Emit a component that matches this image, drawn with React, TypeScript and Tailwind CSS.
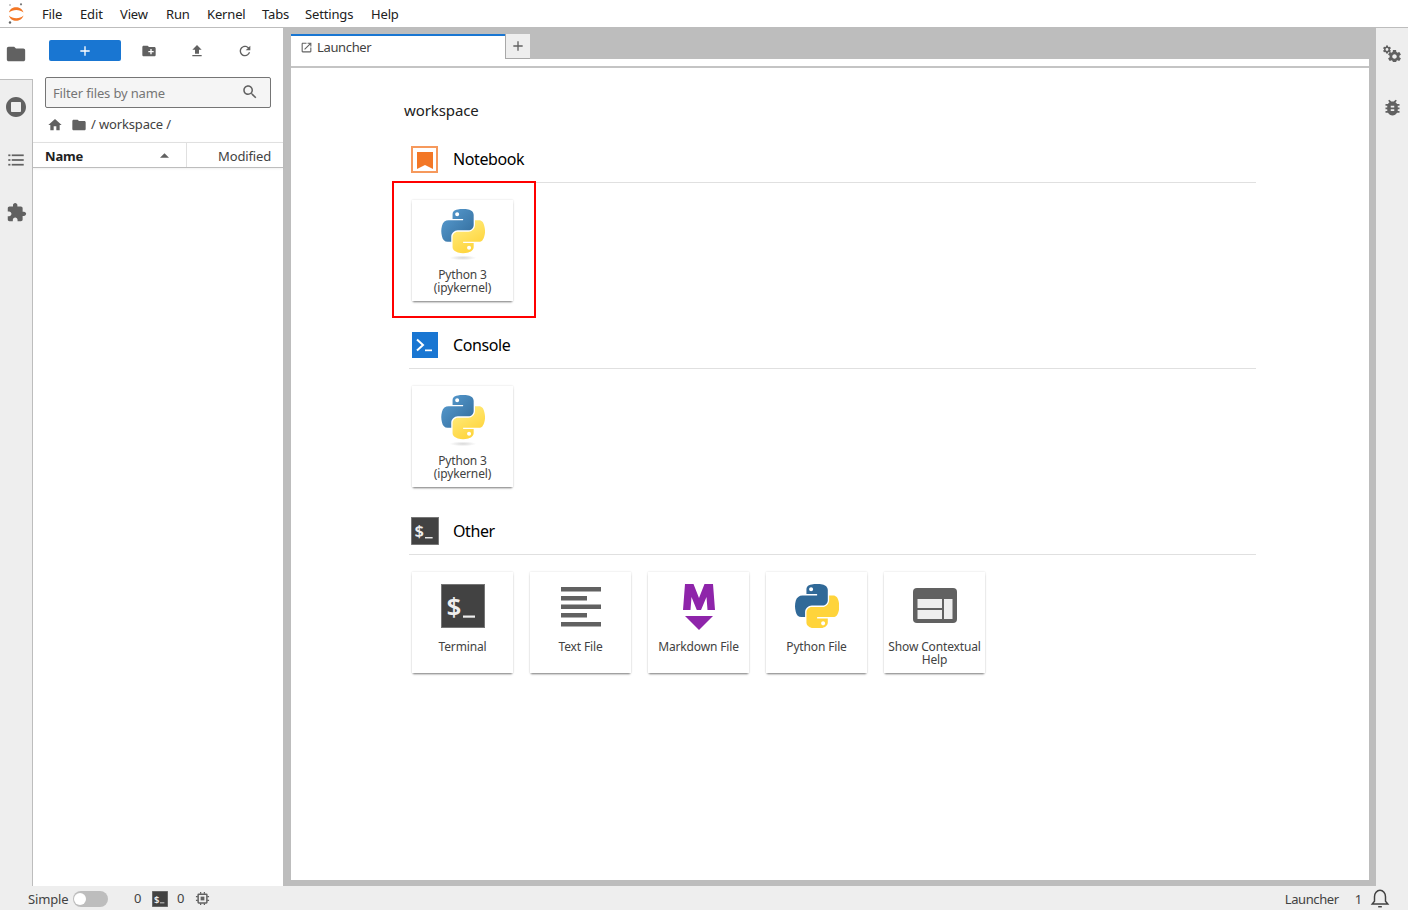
const ICONS = {
  folder: "M10 4H4c-1.1 0-1.99.9-1.99 2L2 18c0 1.1.9 2 2 2h16c1.1 0 2-.9 2-2V8c0-1.1-.9-2-2-2h-8l-2-2z",
  stop: "M12 2C6.47 2 2 6.47 2 12s4.47 10 10 10 10-4.47 10-10S17.53 2 12 2zm5 14c0 .55-.45 1-1 1H8c-.55 0-1-.45-1-1V8c0-.55.45-1 1-1h8c.55 0 1 .45 1 1v8z",
  puzzle: "M20.5 11H19V7c0-1.1-.9-2-2-2h-4V3.5C13 2.12 11.88 1 10.5 1S8 2.12 8 3.5V5H4c-1.1 0-1.99.9-1.99 2v3.8H3.5c1.49 0 2.7 1.21 2.7 2.7s-1.21 2.7-2.7 2.7H2V20c0 1.1.9 2 2 2h3.8v-1.5c0-1.49 1.21-2.7 2.7-2.7 1.49 0 2.7 1.21 2.7 2.7V22H17c1.1 0 2-.9 2-2v-4h1.5c1.38 0 2.5-1.12 2.5-2.5S21.88 11 20.5 11z",
  newFolder: "M20 6h-8l-2-2H4c-1.11 0-1.99.89-1.99 2L2 18c0 1.11.89 2 2 2h16c1.11 0 2-.89 2-2V8c0-1.11-.89-2-2-2zm-1 8h-3v3h-2v-3h-3v-2h3V9h2v3h3v2z",
  upload: "M9 16h6v-6h4l-7-7-7 7h4zm-4 2h14v2H5z",
  refresh: "M17.65 6.35C16.2 4.9 14.21 4 12 4c-4.42 0-7.99 3.58-7.99 8s3.57 8 7.99 8c3.73 0 6.84-2.55 7.73-6h-2.08c-.82 2.33-3.04 4-5.65 4-3.31 0-6-2.69-6-6s2.69-6 6-6c1.66 0 3.14.69 4.22 1.78L13 11h7V4l-2.35 2.35z",
  search: "M15.5 14h-.79l-.28-.27C15.41 12.59 16 11.11 16 9.5 16 5.91 13.09 3 9.5 3S3 5.91 3 9.5 5.91 16 9.5 16c1.61 0 3.09-.59 4.23-1.57l.27.28v.79l5 4.99L20.49 19l-4.99-5zm-6 0C7.01 14 5 11.99 5 9.5S7.01 5 9.5 5 14 7.01 14 9.5 11.99 14 9.5 14z",
  home: "M10 20v-6h4v6h5v-8h3L12 3 2 12h3v8z",
  launch: "M19 19H5V5h7V3H5c-1.11 0-2 .9-2 2v14c0 1.1.89 2 2 2h14c1.1 0 2-.9 2-2v-7h-2v7zM14 3v2h3.59l-9.83 9.83 1.41 1.41L19 6.41V10h2V3h-7z",
  plus: "M19 13h-6v6h-2v-6H5v-2h6V5h2v6h6v2z",
  bug: "M20 8h-2.81c-.45-.78-1.07-1.45-1.82-1.96L17 4.41 15.59 3l-2.17 2.17C12.96 5.06 12.49 5 12 5c-.49 0-.96.06-1.41.17L8.41 3 7 4.41l1.62 1.63C7.88 6.55 7.26 7.22 6.81 8H4v2h2.09c-.05.33-.09.66-.09 1v1H4v2h2v1c0 .34.04.67.09 1H4v2h2.81c1.04 1.79 2.97 3 5.19 3s4.15-1.21 5.19-3H20v-2h-2.09c.05-.33.09-.66.09-1v-1h2v-2h-2v-1c0-.34-.04-.67-.09-1H20V8zm-6 8h-4v-2h4v2zm0-4h-4v-2h4v2z",
};

const GEAR =
  "M19.43 12.98c.04-.32.07-.64.07-.98s-.03-.66-.07-.98l2.11-1.65c.19-.15.24-.42.12-.64l-2-3.46c-.12-.22-.39-.3-.61-.22l-2.49 1c-.52-.4-1.08-.73-1.69-.98l-.38-2.65C14.46 2.18 14.25 2 14 2h-4c-.25 0-.46.18-.49.42l-.38 2.65c-.61.25-1.17.59-1.69.98l-2.49-1c-.23-.09-.49 0-.61.22l-2 3.46c-.13.22-.07.49.12.64l2.11 1.65c-.04.32-.07.65-.07.98s.03.66.07.98l-2.11 1.65c-.19.15-.24.42-.12.64l2 3.46c.12.22.39.3.61.22l2.49-1c.52.4 1.08.73 1.69.98l.38 2.65c.03.24.24.42.49.42h4c.25 0 .46-.18.49-.42l.38-2.65c.61-.25 1.17-.59 1.69-.98l2.49 1c.23.09.49 0 .61-.22l2-3.46c.12-.22.07-.49-.12-.64l-2.11-1.65zM12 15.5c-1.93 0-3.5-1.57-3.5-3.5s1.57-3.5 3.5-3.5 3.5 1.57 3.5 3.5-1.57 3.5-3.5 3.5z";

const PY_BLUE =
  "M54.92.001C50.34.022 45.96.413 42.11 1.095 30.76 3.099 28.7 7.295 28.7 15.032v10.219h26.81v3.406H18.64c-7.79 0-14.62 4.684-16.75 13.594-2.46 10.213-2.57 16.586 0 27.25 1.91 7.938 6.46 13.594 14.25 13.594h9.22v-12.25c0-8.85 7.66-16.656 16.75-16.656h26.78c7.45 0 13.41-6.138 13.41-13.625V15.032c0-7.266-6.13-12.725-13.41-13.938C64.28.328 59.5-.02 54.92.001zm-14.5 8.219c2.77 0 5.03 2.299 5.03 5.125 0 2.816-2.26 5.094-5.03 5.094-2.78 0-5.03-2.278-5.03-5.094 0-2.826 2.25-5.125 5.03-5.125z";
const PY_YELLOW =
  "M85.64 28.657v11.906c0 9.231-7.83 17-16.75 17H42.11c-7.34 0-13.41 6.278-13.41 13.625v25.531c0 7.266 6.32 11.54 13.41 13.625 8.49 2.496 16.63 2.947 26.78 0 6.75-1.954 13.41-5.888 13.41-13.625V86.501H55.52v-3.406h40.19c7.79 0 10.7-5.435 13.41-13.594 2.8-8.399 2.74-16.476 0-27.25-1.93-7.757-5.6-13.594-13.41-13.594zM70.57 93.314c2.78 0 5.03 2.277 5.03 5.093 0 2.827-2.25 5.125-5.03 5.125-2.77 0-5.03-2.298-5.03-5.125 0-2.816 2.26-5.093 5.03-5.093z";

function Icon({ d, className }: { d: string; className: string }) {
  return (
    <svg viewBox="0 0 24 24" className={className} fill="currentColor">
      <path d={d} />
    </svg>
  );
}

function KernelLogo() {
  return (
    <svg viewBox="0 0 110.4 132" className="w-[44px] h-[52px] -mt-[3px]">
      <defs>
        <linearGradient id="pyb" x1="0" y1="0" x2="1" y2="1">
          <stop offset="0" stopColor="#5a9fd4" />
          <stop offset="1" stopColor="#306998" />
        </linearGradient>
        <linearGradient id="pyy" x1="0.7" y1="0.9" x2="0.3" y2="0.2">
          <stop offset="0" stopColor="#ffd43b" />
          <stop offset="1" stopColor="#ffe873" />
        </linearGradient>
        <radialGradient id="pys">
          <stop offset="0" stopColor="#b8b8b8" stopOpacity="0.55" />
          <stop offset="1" stopColor="#b8b8b8" stopOpacity="0" />
        </radialGradient>
      </defs>
      <path d={PY_BLUE} fill="url(#pyb)" />
      <path d={PY_YELLOW} fill="url(#pyy)" />
      <ellipse cx="55" cy="124" rx="34" ry="6" fill="url(#pys)" />
    </svg>
  );
}

function PythonFileLogo() {
  return (
    <svg viewBox="0 0 110.4 110.4" className="w-[44px] h-[44px]">
      <path d={PY_BLUE} fill="#306998" />
      <path d={PY_YELLOW} fill="#ffd43b" />
    </svg>
  );
}

function TerminalGlyph({ className }: { className: string }) {
  return (
    <svg viewBox="0 0 44 44" className={className}>
      <rect x="0.5" y="0.5" width="43" height="43" fill="#424242" stroke="#757575" />
      <text x="5.500" y="32" fill="#eeeeee" fontSize="26" fontWeight="600" fontFamily="'Noto Sans', sans-serif">
        $
      </text>
      <rect x="22" y="31.500" width="12" height="2.200" fill="#eeeeee" />
    </svg>
  );
}

function TextFileLogo() {
  return (
    <svg viewBox="0 0 44 44" className="w-[44px] h-[44px] mt-[1px]" fill="#616161">
      <rect x="2" y="2" width="40" height="4.500" />
      <rect x="2" y="11" width="26" height="4.500" />
      <rect x="2" y="19.500" width="40" height="4.500" />
      <rect x="2" y="28" width="26" height="4.500" />
      <rect x="2" y="37" width="40" height="4.500" />
    </svg>
  );
}

function MarkdownLogo() {
  return (
    <svg viewBox="0 0 44 48" className="w-[44px] h-[48px] -mt-[1px]" fill="#8e24aa">
      <path d="M8 1h8.500L22 15 27.500 1H36l2 26h-7.500l-1-13-5.500 13h-4.200l-5.300-13-1 13H6z" />
      <path d="M8 33h28L22 47z" />
    </svg>
  );
}

function HelpLogo() {
  return (
    <svg viewBox="0 0 44 36" className="w-[44px] h-[36px] mt-[4px]">
      <rect x="0" y="0" width="44" height="35" rx="4" fill="#616161" />
      <rect x="4.500" y="11" width="24.500" height="9" fill="#eeeeee" />
      <rect x="4.500" y="22" width="24.500" height="9" fill="#eeeeee" />
      <rect x="31" y="11" width="8.500" height="20" fill="#eeeeee" />
    </svg>
  );
}

function JupyterLogo() {
  return (
    <svg viewBox="0 0 18 22" className="w-[18px] h-[22px]">
      <path d="M2 9.500C3.500 2.500 14.500 2.500 16.500 9.500C13 6 5.500 6 2 9.500Z" fill="#f37726" />
      <path d="M2 12.500C3.500 19.500 14.500 19.500 16.500 12.500C13 16 5.500 16 2 12.500Z" fill="#f37726" />
      <circle cx="14" cy="1.300" r="1.100" fill="#767677" />
      <circle cx="3" cy="2" r="0.700" fill="#767677" />
      <circle cx="3" cy="19.500" r="1.200" fill="#616262" />
    </svg>
  );
}

function Card({ label, children }: { label: string; children: React.ReactNode }) {
  return (
    <div className="w-[101px] h-[101px] bg-white shadow-[0_2px_2px_-1px_rgba(0,0,0,0.5),0_0_2px_rgba(0,0,0,0.14)] flex flex-col items-center">
      <div className="h-[68px] w-full flex justify-center items-start pt-[12px] shrink-0">{children}</div>
      <div className="text-[12px] leading-[13px] text-center text-[#424242] px-[2px]">{label}</div>
    </div>
  );
}

function Section({
  title,
  icon,
  children,
  className,
}: {
  title: string;
  icon: React.ReactNode;
  children: React.ReactNode;
  className: string;
}) {
  return (
    <div className={className}>
      <div className="h-[37px] flex items-start border-b border-[#e0e0e0]">
        <div className="w-[44px] flex justify-start pl-[2px]">{icon}</div>
        <div className="text-[16px] leading-[26px] tracking-[-0.4px] text-black">{title}</div>
      </div>
      <div className="flex gap-[17px] pl-[3px] pt-[17px]">{children}</div>
    </div>
  );
}

const MENU = [
  { label: "File", cls: "w-[38px]" },
  { label: "Edit", cls: "w-[40px]" },
  { label: "View", cls: "w-[46px]" },
  { label: "Run", cls: "w-[41px]" },
  { label: "Kernel", cls: "w-[55px]" },
  { label: "Tabs", cls: "w-[43px]" },
  { label: "Settings", cls: "w-[66px]" },
  { label: "Help", cls: "w-[40px]" },
];

export default function App() {
  return (
    <div className="h-[910px] w-[1408px] flex flex-col overflow-hidden bg-white text-[13px] tracking-[-0.15px] text-[#424242] font-['Noto_Sans',sans-serif] relative">
      {/* menu bar */}
      <div className="h-[28px] shrink-0 flex items-center border-b border-[#bdbdbd] bg-white">
        <div className="w-[42px] flex justify-center pr-[10px] pt-[1px]">
          <JupyterLogo />
        </div>
        {MENU.map((m) => (
          <div key={m.label} className={`${m.cls} text-[#212121] leading-[27px] pt-[1px]`}>
            {m.label}
          </div>
        ))}
      </div>

      <div className="flex-1 flex min-h-0 bg-[#bdbdbd]">
        {/* left tab rail */}
        <div className="w-[33px] shrink-0 flex flex-col bg-[#eeeeee] border-r border-[#bdbdbd] text-[#616161]">
          <div className="h-[52px] -mr-[1px] bg-white flex items-center justify-center border-b border-[#bdbdbd] pr-[1px]">
            <Icon d={ICONS.folder} className="w-[22px] h-[22px]" />
          </div>
          <div className="h-[53px] flex items-center justify-center">
            <Icon d={ICONS.stop} className="w-[24px] h-[24px]" />
          </div>
          <div className="h-[53px] flex items-center justify-center">
            <svg viewBox="0 0 18 14" className="w-[16px] h-[12px]" fill="#616161">
              <rect x="0" y="0.500" width="2.500" height="2" />
              <rect x="4" y="0.500" width="14" height="2" />
              <rect x="0" y="6" width="2.500" height="2" />
              <rect x="4" y="6" width="14" height="2" />
              <rect x="0" y="11.500" width="2.500" height="2" />
              <rect x="4" y="11.500" width="14" height="2" />
            </svg>
          </div>
          <div className="h-[53px] flex items-center justify-center">
            <Icon d={ICONS.puzzle} className="w-[21px] h-[21px]" />
          </div>
        </div>

        {/* file browser */}
        <div className="w-[250px] shrink-0 bg-white flex flex-col">
          <div className="h-[49px] shrink-0 flex items-start pt-[12px] pl-[16px] text-[#616161]">
            <div className="w-[72px] h-[21px] rounded-[2px] bg-[#1976d2] flex items-center justify-center text-white">
              <Icon d={ICONS.plus} className="w-[16px] h-[16px]" />
            </div>
            <div className="w-[56px] h-[21px] flex items-center justify-center">
              <Icon d={ICONS.newFolder} className="w-[16px] h-[16px]" />
            </div>
            <div className="w-[40px] h-[21px] flex items-center justify-center">
              <Icon d={ICONS.upload} className="w-[16px] h-[16px]" />
            </div>
            <div className="w-[48px] h-[21px] ml-[4px] flex items-center justify-center">
              <Icon d={ICONS.refresh} className="w-[16px] h-[16px]" />
            </div>
          </div>
          <div className="mx-[12px] h-[31px] shrink-0 border border-[#757575] rounded-[2px] bg-[#f5f5f5] flex items-center justify-between pl-[7px] pr-[11px]">
            <span className="text-[#757575] pt-[3px]">Filter files by name</span>
            <Icon d={ICONS.search} className="w-[18px] h-[18px] text-[#616161] -mt-[2px]" />
          </div>
          <div className="h-[34px] shrink-0 flex items-center pl-[14px] text-[#424242]">
            <Icon d={ICONS.home} className="w-[16px] h-[16px] text-[#616161]" />
            <Icon d={ICONS.folder} className="w-[16px] h-[16px] text-[#616161] ml-[8px]" />
            <span className="ml-[4px]">/ workspace /</span>
          </div>
          <div className="h-[26px] shrink-0 flex border-t border-b border-t-[#e0e0e0] border-b-[#bdbdbd] shadow-[0_1px_2px_rgba(0,0,0,0.06)]">
            <div className="w-[154px] flex items-center justify-between pl-[12px] pr-[17px] border-r border-[#e0e0e0] font-bold text-[#212121]">
              <span className="pt-[3px]">Name</span>
              <svg viewBox="0 0 10 5" className="w-[9px] h-[5px]" fill="#616161">
                <path d="M5 0l5 5H0z" />
              </svg>
            </div>
            <div className="flex-1 flex items-center justify-end pr-[12px] pt-[3px]">Modified</div>
          </div>
        </div>

        {/* main dock */}
        <div className="w-[8px] shrink-0" />
        <div className="w-[1078px] shrink-0 flex flex-col mb-[6px]">
          <div className="h-[31px] shrink-0 flex items-end">
            <div className="w-[214px] h-[25px] bg-white border-t-2 border-[#1976d2] flex items-center pl-[9px]">
              <Icon d={ICONS.launch} className="w-[13px] h-[13px] text-[#616161]" />
              <span className="ml-[4px] text-[#424242] tracking-[-0.35px]">Launcher</span>
            </div>
            <div className="w-[25px] h-[25px] bg-[#eeeeee] border-l border-b border-[#a8a8a8] flex items-center justify-center text-[#616161]">
              <Icon d={ICONS.plus} className="w-[16px] h-[16px]" />
            </div>
          </div>
          <div className="flex-1 bg-white flex flex-col">
            <div className="h-[9px] shrink-0 border-b-2 border-[#c4c4c4]" />
            <div className="pl-[113px] pt-[31px] text-[15px] leading-[22px] tracking-[-0.1px] text-[#212121]">workspace</div>
            <Section
              className="ml-[118px] w-[847px] mt-[25px]"
              title="Notebook"
              icon={
                <svg viewBox="0 0 27 27" className="w-[27px] h-[27px]">
                  <rect x="1" y="1" width="25" height="25" fill="none" stroke="#f37726" strokeOpacity="0.75" strokeWidth="2" />
                  <path d="M6 6h16v17l-8-4-8 4z" fill="#f37726" />
                </svg>
              }
            >
              <Card label="Python 3 (ipykernel)">
                <KernelLogo />
              </Card>
            </Section>
            <Section
              className="ml-[118px] w-[847px] mt-[31px]"
              title="Console"
              icon={
                <svg viewBox="0 0 26 26" className="w-[26px] h-[26px] ml-[1px]">
                  <rect width="26" height="26" fill="#1976d2" />
                  <path d="M5 7.500l6 5.500-6 5.500" fill="none" stroke="#ffffff" strokeWidth="2" />
                  <rect x="13" y="17.500" width="7" height="1.700" fill="#ffffff" />
                </svg>
              }
            >
              <Card label="Python 3 (ipykernel)">
                <KernelLogo />
              </Card>
            </Section>
            <Section
              className="ml-[118px] w-[847px] mt-[31px]"
              title="Other"
              icon={<TerminalGlyph className="w-[28px] h-[28px] -mt-[1px]" />}
            >
              <Card label="Terminal">
                <TerminalGlyph className="w-[44px] h-[44px]" />
              </Card>
              <Card label="Text File">
                <TextFileLogo />
              </Card>
              <Card label="Markdown File">
                <MarkdownLogo />
              </Card>
              <Card label="Python File">
                <PythonFileLogo />
              </Card>
              <Card label="Show Contextual Help">
                <HelpLogo />
              </Card>
            </Section>
          </div>
        </div>
        <div className="w-[7px] shrink-0" />

        {/* right tab rail */}
        <div className="w-[32px] shrink-0 bg-[#eeeeee] flex flex-col items-center text-[#616161]">
          <svg viewBox="0 0 18 18" className="w-[18px] h-[18px] mt-[16px]" fill="currentColor">
            <path d={GEAR} transform="translate(-0.800 0.700) scale(0.4)" />
            <path d={GEAR} transform="translate(3.700 4.700) scale(0.65)" />
          </svg>
          <Icon d={ICONS.bug} className="w-[21px] h-[21px] mt-[35px]" />
        </div>
      </div>

      {/* status bar */}
      <div className="h-[24px] shrink-0 bg-[#eeeeee] flex items-center text-[#424242]">
        <span className="ml-[28px] w-[41px] pt-[3px]">Simple</span>
        <div className="ml-[4px] w-[35px] h-[16px] rounded-full bg-[#bdbdbd] flex items-center pl-[1px] mt-[1px]">
          <div className="w-[12px] h-[12px] rounded-full bg-white" />
        </div>
        <span className="ml-[26px] w-[8px] pt-[2px]">0</span>
        <TerminalGlyph className="w-[16px] h-[16px] ml-[10px] mt-[2px]" />
        <span className="ml-[9px] w-[8px] pt-[2px]">0</span>
        <svg viewBox="0 0 24 24" className="w-[15px] h-[15px] ml-[10px] mt-[1px]" fill="none" stroke="#616161" strokeWidth="2.400">
          <rect x="5" y="5" width="14" height="14" rx="1" />
          <rect x="9" y="9" width="6" height="6" fill="#616161" stroke="none" />
          <path d="M9 1.500v3M15 1.500v3M9 19.500v3M15 19.500v3M1.500 9h3M1.500 15h3M19.500 9h3M19.500 15h3" strokeWidth="2" />
        </svg>
        <span className="ml-auto pt-[3px] tracking-[-0.4px]">Launcher</span>
        <span className="ml-[16px] pt-[3px]">1</span>
        <svg viewBox="0 0 24 24" className="w-[22px] h-[22px] ml-[7px] mr-[17px]" fill="none" stroke="#424242" strokeWidth="1.600">
          <path d="M3.500 18.500h17l-2.500-3v-5c0-3.500-2.500-7-6-7s-6 3.500-6 7v5z" />
          <path d="M10 21.500h4" />
        </svg>
      </div>

      {/* annotation drawn over the first launcher card */}
      <div className="absolute left-[392px] top-[181px] w-[144px] h-[137px] border-2 border-[#ff0000]" />
    </div>
  );
}
